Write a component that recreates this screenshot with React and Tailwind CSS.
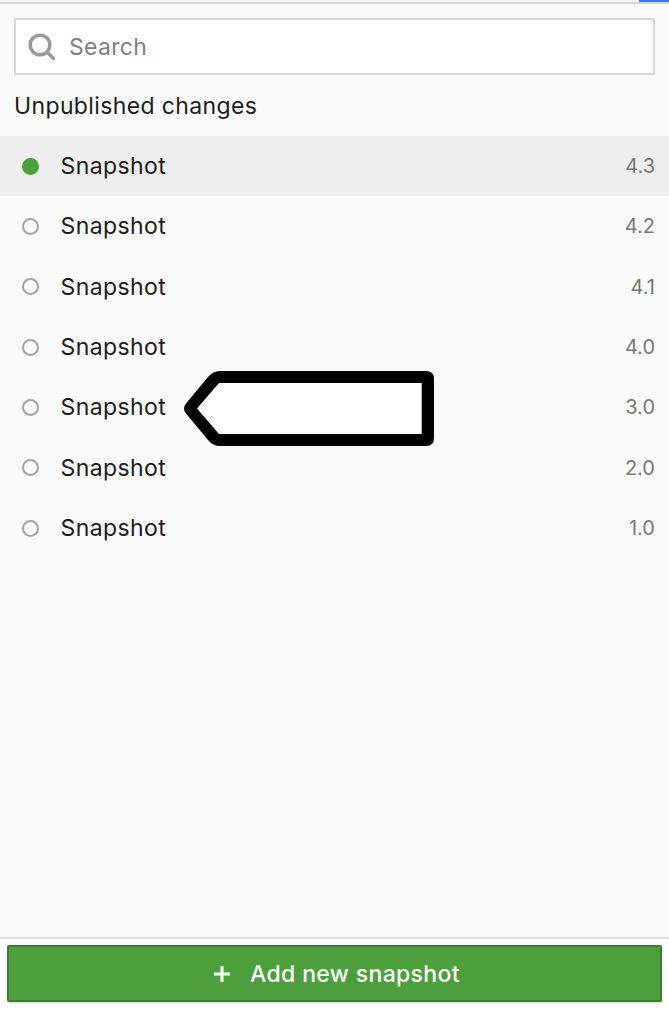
const rows = ["4.3", "4.2", "4.1", "4.0", "3.0", "2.0", "1.0"];

export default function App() {
  return (
    <div className="relative flex h-[1024px] w-[669px] flex-col overflow-hidden bg-white font-['Inter',sans-serif]">
      <div className="flex h-[4px] justify-end border-b-2 border-[#d4d4d4] bg-[#f4f4f4]">
        <div className="h-[2px] w-[30px] bg-[#3b78e0]" />
      </div>
      <div className="flex flex-1 flex-col bg-[#fafafa]">
        <div className="mx-[14px] mt-[14px] flex h-[57px] items-center border-2 border-[#d6d6d6] bg-white pl-[12px]">
          <svg width="28" height="28" viewBox="0 0 28 28" fill="none" stroke="#999999" strokeWidth="3.4" strokeLinecap="round">
            <circle cx="12" cy="12" r="9.8" />
            <path d="M19.5 19.5 L25.5 25.5" />
          </svg>
          <span className="ml-[13px] pt-[2px] text-[23px] leading-none tracking-[0.3px] text-[#808080]">Search</span>
        </div>
        <div className="ml-[14px] mt-[17px] h-[27px] text-[23px] leading-[29px] tracking-[0.37px] text-[#1c1c1c]">Unpublished changes</div>
        <div className="mt-[17px] flex flex-col">
          {rows.map((v, i) => (
            <div key={v} className={`flex h-[60.33px] items-center pl-[22px] pr-[14px] ${i === 0 ? "bg-[#eeeeee]" : ""}`}>
              {i === 0 ? (
                <span className="h-[17px] w-[17px] rounded-full bg-[#4b9f3c]" />
              ) : (
                <span className="h-[17px] w-[17px] rounded-full border-[2.5px] border-[#a3a3a3]" />
              )}
              <span className="ml-[21.5px] flex-1 pt-[1px] text-[23px] leading-none tracking-[0.4px] text-[#1c1c1c]">Snapshot</span>
              <span className="text-[20px] leading-none text-[#777777]">{v}</span>
            </div>
          ))}
        </div>
      </div>
      <div className="h-[87px] border-t-2 border-[#dedede] bg-white px-[7px] pt-[6px]">
        <div className="flex h-[57px] items-center justify-center gap-[19px] rounded-[2px] border-2 border-[#3f7a34] bg-[#4d9f3d] pl-[4px] text-[23px] font-medium tracking-[0.35px] text-white shadow-[0_1px_2px_rgba(0,0,0,0.15)]">
          <svg width="18" height="18" viewBox="0 0 18 18" stroke="#ffffff" strokeWidth="3">
            <path d="M9 1 V17 M1 9 H17" />
          </svg>
          <span className="pt-[1px]">Add new snapshot</span>
        </div>
      </div>
      <svg className="absolute left-[180px] top-[366px]" width="260" height="86" viewBox="0 0 260 86">
        <path fill="#000000" d="M6 37.5 Q2 42.5 6 47.5 L28 74 Q33 80 40 80 H246 Q254 80 254 72 V13 Q254 5 246 5 H40 Q33 5 28 11 Z" />
        <path fill="#ffffff" d="M17 42.5 L39 17 H241.7 V68 H39 Z" />
      </svg>
    </div>
  );
}
